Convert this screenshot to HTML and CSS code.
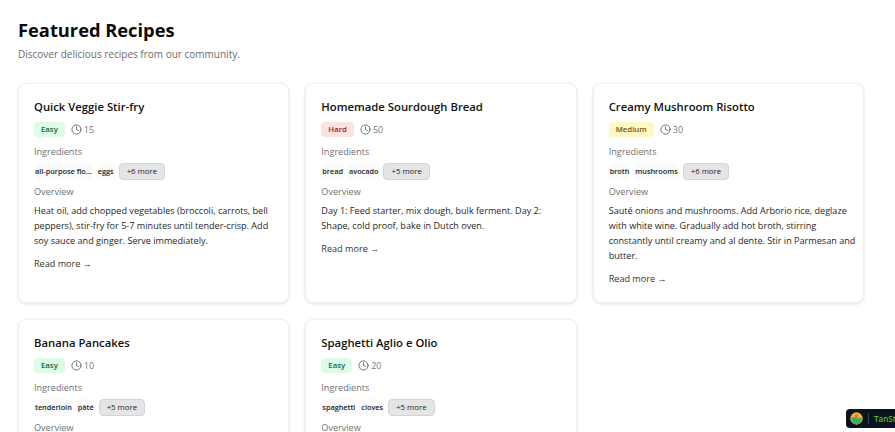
FILE: index.html
```html
<!DOCTYPE html>
<html lang="en">

<head>
    <meta charset="UTF-8">
    <title>Featured Recipes</title>
    <link rel="stylesheet" href="styles.css">
</head>

<body>
    <main class="page">
        <h1>Featured Recipes</h1>
        <p class="subtitle">Discover delicious recipes from our community.</p>

        <div class="recipe-grid">
            <article class="card">
                <h2>Quick Veggie Stir-fry</h2>
                <div class="meta">
                    <span class="badge badge-easy">Easy</span>
                    <span class="time">
                        <svg viewBox="0 0 24 24"><circle cx="12" cy="12" r="10"/><path d="M12 6v6l4 2"/></svg>
                        15
                    </span>
                </div>
                <div class="label">Ingredients</div>
                <div class="tags">
                    <span class="tag">all-purpose flo...</span>
                    <span class="tag">eggs</span>
                    <span class="more">+6 more</span>
                </div>
                <div class="label label-overview">Overview</div>
                <p class="text">Heat oil, add chopped vegetables (broccoli, carrots, bell peppers), stir-fry for 5-7 minutes until tender-crisp. Add soy sauce and ginger. Serve immediately.</p>
                <a class="read-more">Read more →</a>
            </article>

            <article class="card">
                <h2>Homemade Sourdough Bread</h2>
                <div class="meta">
                    <span class="badge badge-hard">Hard</span>
                    <span class="time">
                        <svg viewBox="0 0 24 24"><circle cx="12" cy="12" r="10"/><path d="M12 6v6l4 2"/></svg>
                        50
                    </span>
                </div>
                <div class="label">Ingredients</div>
                <div class="tags">
                    <span class="tag">bread</span>
                    <span class="tag">avocado</span>
                    <span class="more">+5 more</span>
                </div>
                <div class="label label-overview">Overview</div>
                <p class="text">Day 1: Feed starter, mix dough, bulk ferment. Day 2: Shape, cold proof, bake in Dutch oven.</p>
                <a class="read-more">Read more →</a>
            </article>

            <article class="card">
                <h2>Creamy Mushroom Risotto</h2>
                <div class="meta">
                    <span class="badge badge-medium">Medium</span>
                    <span class="time">
                        <svg viewBox="0 0 24 24"><circle cx="12" cy="12" r="10"/><path d="M12 6v6l4 2"/></svg>
                        30
                    </span>
                </div>
                <div class="label">Ingredients</div>
                <div class="tags">
                    <span class="tag">broth</span>
                    <span class="tag">mushrooms</span>
                    <span class="more">+6 more</span>
                </div>
                <div class="label label-overview">Overview</div>
                <p class="text">Sauté onions and mushrooms. Add Arborio rice, deglaze with white wine. Gradually add hot broth, stirring constantly until creamy and al dente. Stir in Parmesan and butter.</p>
                <a class="read-more">Read more →</a>
            </article>

            <article class="card">
                <h2>Banana Pancakes</h2>
                <div class="meta">
                    <span class="badge badge-easy">Easy</span>
                    <span class="time">
                        <svg viewBox="0 0 24 24"><circle cx="12" cy="12" r="10"/><path d="M12 6v6l4 2"/></svg>
                        10
                    </span>
                </div>
                <div class="label">Ingredients</div>
                <div class="tags">
                    <span class="tag">tenderloin</span>
                    <span class="tag">pâté</span>
                    <span class="more">+5 more</span>
                </div>
                <div class="label label-overview">Overview</div>
            </article>

            <article class="card">
                <h2>Spaghetti Aglio e Olio</h2>
                <div class="meta">
                    <span class="badge badge-easy">Easy</span>
                    <span class="time">
                        <svg viewBox="0 0 24 24"><circle cx="12" cy="12" r="10"/><path d="M12 6v6l4 2"/></svg>
                        20
                    </span>
                </div>
                <div class="label">Ingredients</div>
                <div class="tags">
                    <span class="tag">spaghetti</span>
                    <span class="tag">cloves</span>
                    <span class="more">+5 more</span>
                </div>
                <div class="label label-overview">Overview</div>
            </article>
        </div>
    </main>

    <div class="devtools">
        <svg class="devtools-logo" viewBox="0 0 20 20">
            <circle cx="10" cy="10" r="9.5" fill="#f2b63c"/>
            <path d="M2 9c3-2 6-1 8 0s5 1 8-1v3a8 8 0 0 1-16 0z" fill="#3fae5a"/>
            <circle cx="10" cy="6" r="3" fill="#f46a3a"/>
        </svg>
        <span class="devtools-line"></span>
        <span class="devtools-name">TanStack</span>
    </div>
</body>

</html>
```

FILE: styles.css
```css
html {
  height: 100%;
  overflow: hidden;
}

body {
  margin: 0;
  height: 100%;
  overflow: hidden;
  background: #fff;
  color: #111;
  font-family: "Open Sans", "Noto Sans", Arial, sans-serif;
}

.page {
  padding: 16px 31px 0 18px;
}

h1 {
  font-size: 18.3px;
  line-height: 28px;
  font-weight: 700;
  margin: 0 0 2px 0;
  color: #0a0a0a;
}

.subtitle {
  font-size: 10px;
  line-height: 16px;
  margin: 0 0 21px 0;
  color: #6b6b6b;
}

.recipe-grid {
  display: grid;
  grid-template-columns: repeat(3, 1fr);
  gap: 16px;
}

.card {
  background: #fff;
  border: 1px solid #f1f1f1;
  border-radius: 8px;
  box-shadow: 0 1px 3px rgba(0, 0, 0, 0.12);
  padding: 15px 15px 16px;
}

h2 {
  font-size: 11.3px;
  line-height: 16px;
  font-weight: 600;
  margin: 0 0 7px 0;
  color: #111;
}

.meta {
  display: flex;
  align-items: center;
  gap: 6px;
  margin-bottom: 8px;
}

.badge {
  font-size: 7.8px;
  line-height: 15px;
  font-weight: 600;
  padding: 0 7px;
  border-radius: 4px;
}

.badge-easy {
  background: #dcfce7;
  color: #166534;
}

.badge-hard {
  background: #fee2e2;
  color: #991b1b;
}

.badge-medium {
  background: #fef9c3;
  color: #854d0e;
}

.time {
  display: flex;
  align-items: center;
  gap: 2px;
  font-size: 9px;
  color: #777;
}

.time svg {
  width: 11px;
  height: 11px;
  fill: none;
  stroke: #666;
  stroke-width: 2;
  stroke-linecap: round;
  stroke-linejoin: round;
}

.label {
  font-size: 9.1px;
  line-height: 14px;
  color: #6f6f6f;
  margin-bottom: 4px;
}

.label-overview {
  margin-top: 5px;
  margin-bottom: 4px;
}

.tags {
  display: flex;
  align-items: center;
  gap: 4px;
}

.tag {
  font-size: 7.3px;
  line-height: 17px;
  font-weight: 600;
  padding: 0 1px;
  background: #fafafa;
  border-radius: 4px;
  color: #222;
}

.more {
  font-size: 7.8px;
  line-height: 15px;
  padding: 0 7px;
  background: #e5e5e5;
  border: 1px solid #d4d4d4;
  border-radius: 4px;
  color: #222;
}

.text {
  font-size: 9.1px;
  line-height: 15px;
  margin: 0 -8px 8px 0;
  color: #262626;
}

.read-more {
  display: block;
  font-size: 9.1px;
  line-height: 15px;
  color: #333;
}

/* devtools button sits over the page */
.devtools {
  position: fixed;
  left: 846px;
  top: 409px;
  display: flex;
  align-items: center;
  gap: 5px;
  width: 70px;
  height: 19px;
  padding: 0 4px;
  box-sizing: border-box;
  background: #0b1220;
  border-radius: 4px;
}

.devtools-logo {
  width: 13px;
  height: 13px;
  flex: none;
}

.devtools-line {
  width: 1px;
  height: 11px;
  background: #3a4252;
  flex: none;
}

.devtools-name {
  font-size: 8px;
  font-weight: 600;
  color: #5bc01e;
}
```
